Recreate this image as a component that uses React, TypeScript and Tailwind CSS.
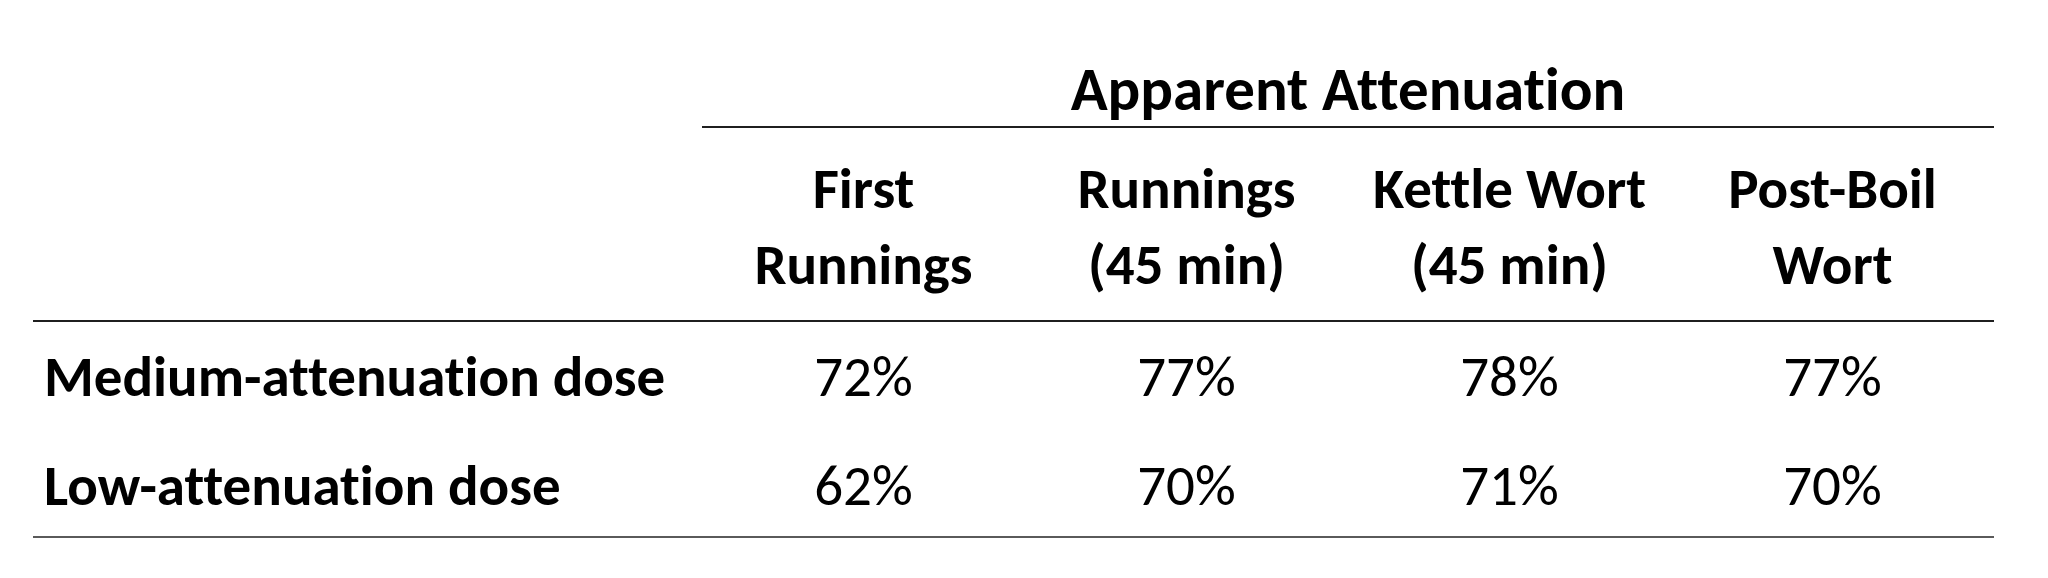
import React from "react";

const columns = [
    ["First", "Runnings"],
    ["Runnings", "(45 min)"],
    ["Kettle Wort", "(45 min)"],
    ["Post-Boil", "Wort"],
];

const rows = [
    { label: "Medium-attenuation dose", values: ["72%", "77%", "78%", "77%"] },
    { label: "Low-attenuation dose", values: ["62%", "70%", "71%", "70%"] },
];

export default function App() {
    return (
        <div className="min-h-[578px] w-[2048px] bg-white pl-[33px] pt-[52px] text-black font-['Carlito','Lato',sans-serif] text-[57px] leading-[74px] [font-variant-ligatures:none]">
            <div className="w-[1961px]">
                {/* group heading */}
                <div className="grid grid-cols-[669px_1292px]">
                    <div />
                    <div className="border-b-2 border-[#1f1f1f] text-center text-[61px] font-bold">
                        Apparent Attenuation
                    </div>
                </div>

                {/* column headings */}
                <div className="grid grid-cols-[669px_repeat(4,323px)] border-b-2 border-[#1f1f1f] pt-[23px] pb-[17px] leading-[76px]">
                    <div />
                    {columns.map((lines, i) => (
                        <div key={i} className="text-center font-bold">
                            {lines.map((l) => (
                                <div key={l}>{l}</div>
                            ))}
                        </div>
                    ))}
                </div>

                {/* data */}
                <div className="border-b-2 border-[#5a5a5a]">
                    {rows.map((r, idx) => (
                        <div
                            key={r.label}
                            className={`grid grid-cols-[669px_repeat(4,323px)] pt-[18px] ${idx === 0 ? "pb-[17px]" : "pb-[13px]"}`}
                        >
                            <div className="pl-[11px] font-bold">{r.label}</div>
                            {r.values.map((v, i) => (
                                <div key={i} className="text-center">{v}</div>
                            ))}
                        </div>
                    ))}
                </div>
            </div>
        </div>
    );
}
